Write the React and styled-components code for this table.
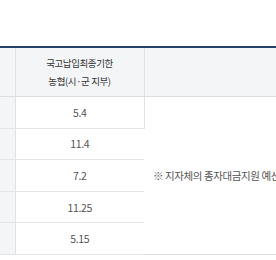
import React from "react";
import styled, { createGlobalStyle } from "styled-components";

const GlobalStyle = createGlobalStyle`
  html, body {
    margin: 0;
    padding: 0;
    background: #fff;
    overflow: hidden;
  }
  body {
    font-family: "Noto Sans CJK KR", "Noto Sans", sans-serif;
    color: #555;
  }
`;

// 표 바깥 영역 (위쪽 여백)
const Wrapper = styled.div`
  width: 276px;
  height: 260px;
  padding-top: 46px;
  box-sizing: border-box;
  overflow: hidden;
`;

const Table = styled.table`
  border-collapse: collapse;
  table-layout: fixed;
  width: 560px;
  border-top: 2px solid #24406a;
  border-bottom: 1px solid #dcdde0;
`;

const HeadCell = styled.th`
  height: 48px;
  padding: 0;
  background: #f4f5f7;
  border-bottom: 1px solid #dcdde0;
  border-left: ${(p) => (p.$first ? "none" : "1px solid #e1e2e5")};
  font-weight: 400;
  font-size: 9.5px;
  letter-spacing: -0.4px;
  line-height: 18px;
  color: #333;
  text-align: center;
`;

const Row = styled.tr`
  height: 31.6px;
`;

const SideCell = styled.td`
  padding: 0;
  background: #f4f5f7;
  border-bottom: 1px solid #e3e4e7;
`;

const NumCell = styled.td`
  padding: 0;
  border-left: 1px solid #e1e2e5;
  border-bottom: 1px solid #e3e4e7;
  font-size: 10.5px;
  letter-spacing: -0.3px;
  color: #555;
  text-align: center;
`;

// 행 병합된 비고 칸
const NoteCell = styled.td`
  position: relative;
  padding: 0 0 0 9px;
  white-space: nowrap;
  font-size: 10.5px;
  letter-spacing: -0.4px;
  color: #555;
  vertical-align: middle;

  &::before {
    content: "";
    position: absolute;
    left: 0;
    top: 0;
    width: 1px;
    height: 32px;
    background: #e1e2e5;
  }
`;

const rows = ["5.4", "11.4", "7.2", "11.25", "5.15"];

function App() {
  return (
    <Wrapper>
      <GlobalStyle />
      <Table>
        <colgroup>
          <col style={{ width: 15 }} />
          <col style={{ width: 129 }} />
          <col />
        </colgroup>
        <thead>
          <tr>
            <HeadCell $first></HeadCell>
            <HeadCell>
              국고납입최종기한
              <br />
              농협(시·군 지부)
            </HeadCell>
            <HeadCell></HeadCell>
          </tr>
        </thead>
        <tbody>
          {rows.map((v, i) => (
            <Row key={v}>
              <SideCell />
              <NumCell>{v}</NumCell>
              {i === 0 && (
                <NoteCell rowSpan={rows.length}>
                  ※ 지자체의 종자대금지원 예산 사정에 따라 달라질 수 있음
                </NoteCell>
              )}
            </Row>
          ))}
        </tbody>
      </Table>
    </Wrapper>
  );
}

export default App;
